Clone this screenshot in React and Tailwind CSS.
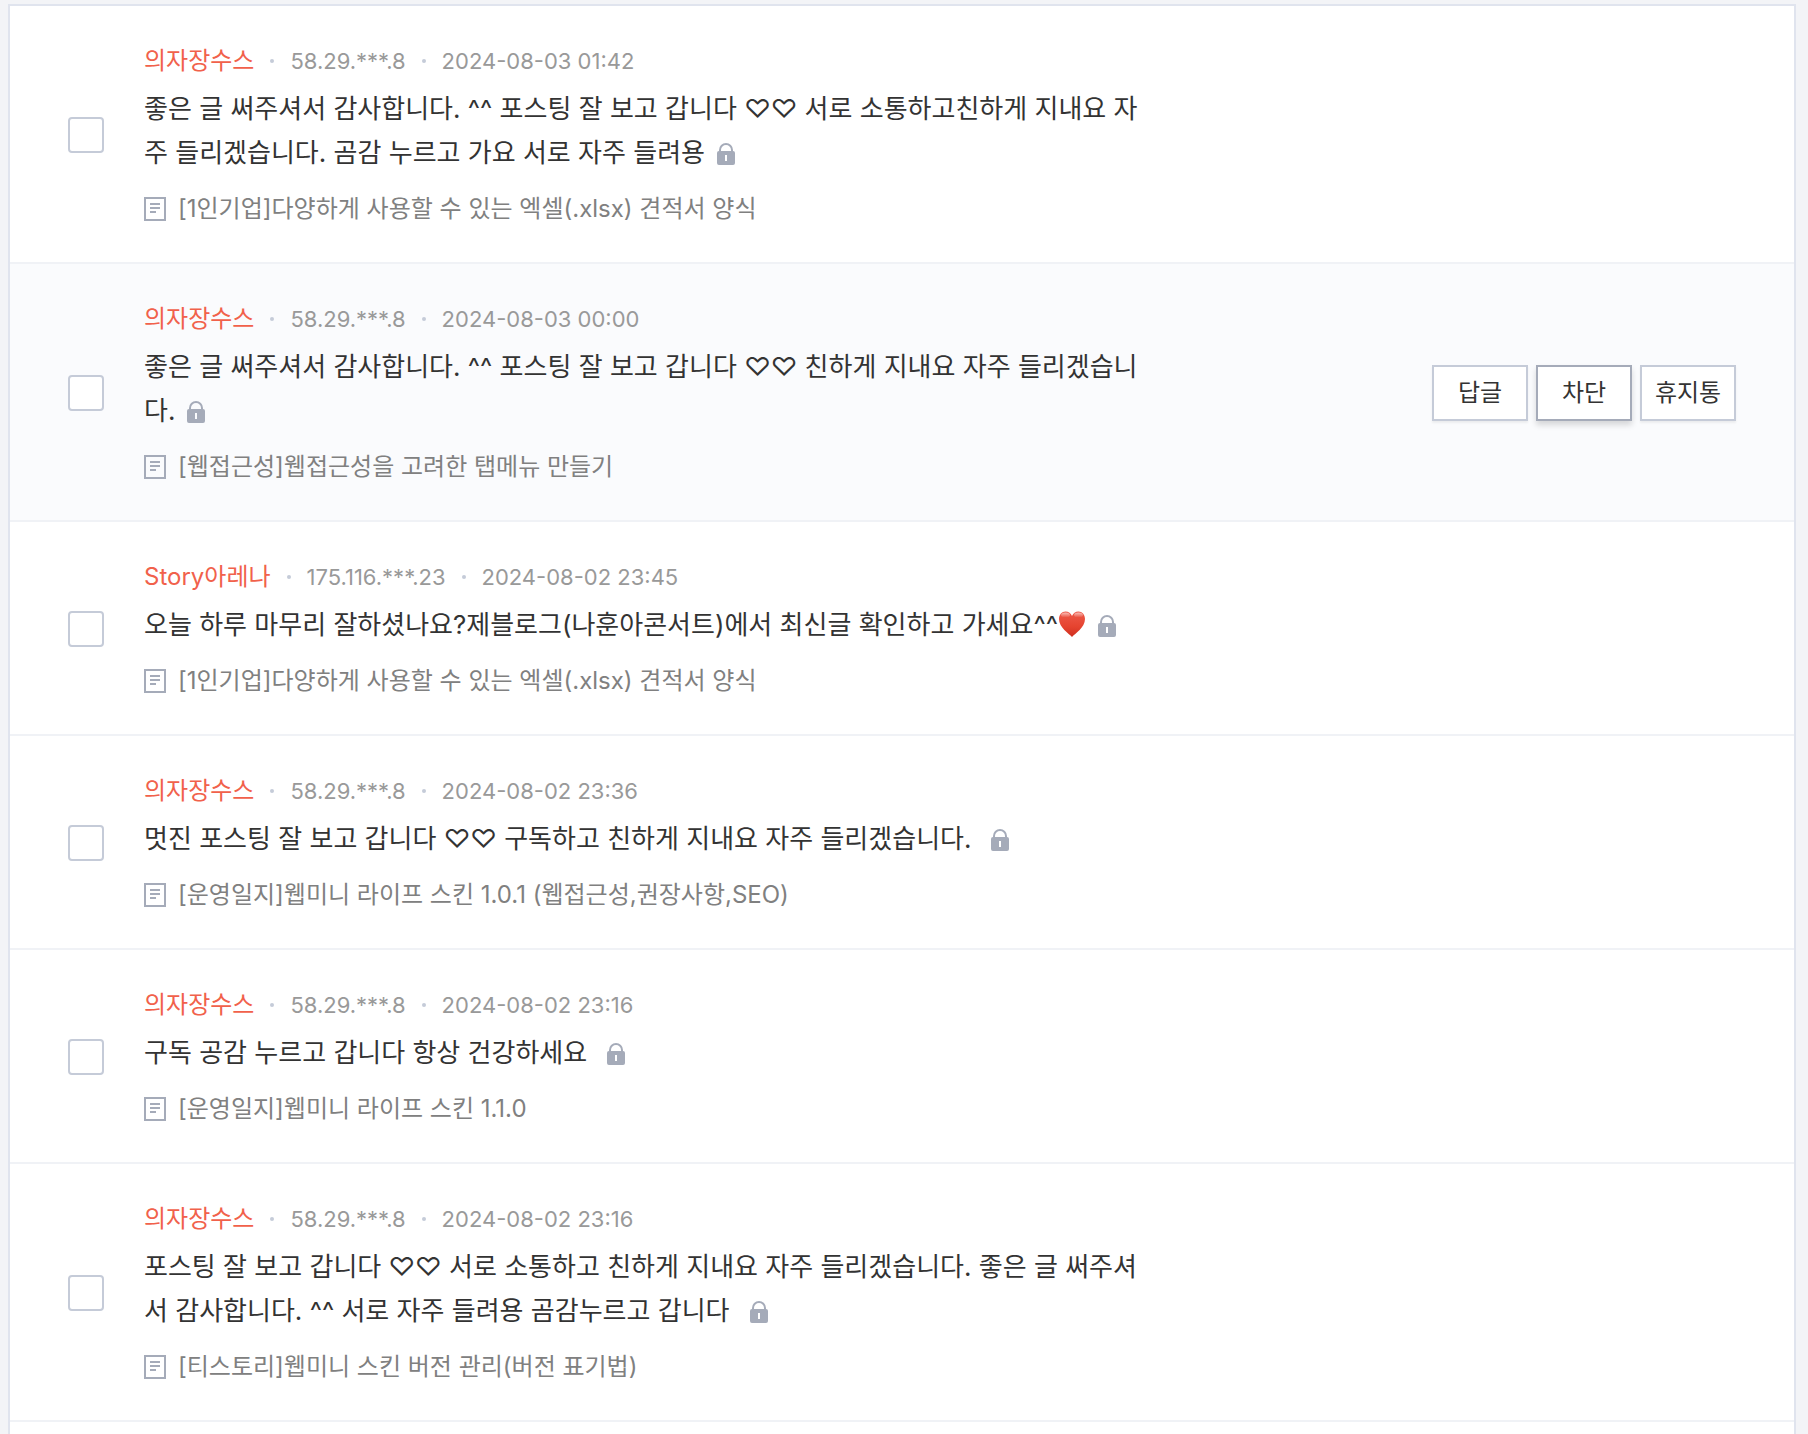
const comments = [
  {
    id: 1,
    author: '의자장수스',
    ip: '58.29.***.8',
    date: '2024-08-03 01:42',
    body: '좋은 글 써주셔서 감사합니다. ^^ 포스팅 잘 보고 갑니다 ♡♡ 서로 소통하고친하게 지내요 자주 들리겠습니다. 곰감 누르고 가요 서로 자주 들려용',
    post: '[1인기업]다양하게 사용할 수 있는 엑셀(.xlsx) 견적서 양식',
  },
  {
    id: 2,
    author: '의자장수스',
    ip: '58.29.***.8',
    date: '2024-08-03 00:00',
    body: '좋은 글 써주셔서 감사합니다. ^^ 포스팅 잘 보고 갑니다 ♡♡ 친하게 지내요 자주 들리겠습니다.',
    post: '[웹접근성]웹접근성을 고려한 탭메뉴 만들기',
    active: true,
  },
  {
    id: 3,
    author: 'Story아레나',
    ip: '175.116.***.23',
    date: '2024-08-02 23:45',
    body: '오늘 하루 마무리 잘하셨나요?제블로그(나훈아콘서트)에서 최신글 확인하고 가세요^^',
    redHeart: true,
    post: '[1인기업]다양하게 사용할 수 있는 엑셀(.xlsx) 견적서 양식',
  },
  {
    id: 4,
    author: '의자장수스',
    ip: '58.29.***.8',
    date: '2024-08-02 23:36',
    body: '멋진 포스팅 잘 보고 갑니다 ♡♡ 구독하고 친하게 지내요 자주 들리겠습니다.',
    wideGap: true,
    post: '[운영일지]웹미니 라이프 스킨 1.0.1 (웹접근성,권장사항,SEO)',
  },
  {
    id: 5,
    author: '의자장수스',
    ip: '58.29.***.8',
    date: '2024-08-02 23:16',
    body: '구독 공감 누르고 갑니다 항상 건강하세요',
    wideGap: true,
    post: '[운영일지]웹미니 라이프 스킨 1.1.0',
  },
  {
    id: 6,
    author: '의자장수스',
    ip: '58.29.***.8',
    date: '2024-08-02 23:16',
    body: '포스팅 잘 보고 갑니다 ♡♡ 서로 소통하고 친하게 지내요 자주 들리겠습니다. 좋은 글 써주셔서 감사합니다. ^^ 서로 자주 들려용 곰감누르고 갑니다',
    wideGap: true,
    post: '[티스토리]웹미니 스킨 버전 관리(버전 표기법)',
  },
];

function LockIcon() {
  return (
    <svg width="18" height="22" viewBox="0 0 18 22" className="inline-block align-[-3px]" role="img" aria-label="비밀글">
      <path d="M3 9V7a6 6 0 0 1 12 0v2" fill="none" stroke="#a5abb9" strokeWidth="2" />
      <path
        fillRule="evenodd"
        fill="#a5abb9"
        d="M2 8h14a2 2 0 0 1 2 2v10a2 2 0 0 1-2 2H2a2 2 0 0 1-2-2V10a2 2 0 0 1 2-2zM8 12v6h2v-6z"
      />
    </svg>
  );
}

function PostIcon() {
  return (
    <svg width="22" height="24" viewBox="0 0 22 24" className="shrink-0" aria-hidden="true">
      <rect x="1" y="1" width="20" height="22" fill="none" stroke="#a5abb9" strokeWidth="2" />
      <path d="M6 7h10M6 11h10M6 15h6" stroke="#a5abb9" strokeWidth="2" />
    </svg>
  );
}

function RedHeart() {
  return (
    <svg width="28" height="28" viewBox="0 0 28 28" className="inline-block align-[-4px]" role="img" aria-label="하트">
      <defs>
        <linearGradient id="heart" x1="0" y1="0" x2="0" y2="1">
          <stop offset="0" stopColor="#ee5a4a" />
          <stop offset="0.6" stopColor="#e5432f" />
          <stop offset="1" stopColor="#cf2f20" />
        </linearGradient>
        <linearGradient id="shine" x1="0" y1="0" x2="0" y2="1">
          <stop offset="0" stopColor="#fff" stopOpacity="0.6" />
          <stop offset="1" stopColor="#fff" stopOpacity="0" />
        </linearGradient>
      </defs>
      <path
        d="M14 27C11 23.500 1 17.500 1 9C1 4.500 4 1.500 7.500 1.500C10.500 1.500 13 3.500 14 6C15 3.500 17.500 1.500 20.500 1.500C24 1.500 27 4.500 27 9C27 17.500 17 23.500 14 27Z"
        fill="url(#heart)"
      />
      <ellipse cx="7.500" cy="5" rx="4.500" ry="2.500" fill="url(#shine)" />
      <ellipse cx="20.500" cy="5" rx="4.500" ry="2.500" fill="url(#shine)" />
    </svg>
  );
}

function Dot() {
  return <span className="mx-4 size-1 rounded-full bg-[#c5cbd8]" aria-hidden="true" />;
}

function ActionButton({ children, focused }) {
  return (
    <button
      type="button"
      className={
        focused
          ? 'h-14 w-24 border-2 border-[#a5abb9] bg-white text-[24px] leading-8 whitespace-nowrap text-[#333] shadow-[0_4px_6px_rgba(0,0,0,0.15)]'
          : 'h-14 w-24 border-2 border-[#c5cbd8] bg-white text-[24px] leading-8 whitespace-nowrap text-[#333] shadow-[0_2px_2px_rgba(0,0,0,0.06)]'
      }
    >
      {children}
    </button>
  );
}

function Comment({ item }) {
  return (
    <li
      className={
        item.active
          ? 'flex items-center border-b-2 border-[#f0f2f6] bg-[#fafbfd] px-[58px] pt-[37px] pb-[35px]'
          : 'flex items-center border-b-2 border-[#f0f2f6] px-[58px] pt-[37px] pb-[35px]'
      }
    >
      <input
        type="checkbox"
        aria-label={`${item.author} ${item.date} 댓글 선택`}
        className="size-9 shrink-0 appearance-none rounded-[4px] border-2 border-[#c5cbd8] bg-white checked:bg-[#c5cbd8]"
      />
      <div className="ml-10 min-w-0 max-w-[1000px] flex-1">
        <div className="flex items-center text-[22px] leading-9 text-[#999]">
          <a href="#author" className="text-[24px] text-[#f1614b]">{item.author}</a>
          <Dot />
          <span>{item.ip}</span>
          <Dot />
          <time>{item.date}</time>
        </div>
        <p className="mt-2 text-[26px] leading-[44px] break-all text-[#333]">
          {item.body}
          {item.redHeart && <RedHeart />}
          <span className={item.wideGap ? 'ml-5' : 'ml-3'}>
            <LockIcon />
          </span>
        </p>
        <a href="#post" className="mt-4 flex items-center gap-3 text-[24px] leading-9 text-[#808080]">
          <PostIcon />
          <span>{item.post}</span>
        </a>
      </div>
      {item.active && (
        <div className="ml-auto flex shrink-0 gap-2">
          <ActionButton>답글</ActionButton>
          <ActionButton focused>차단</ActionButton>
          <ActionButton>휴지통</ActionButton>
        </div>
      )}
    </li>
  );
}

export default function App() {
  return (
    <main className="min-h-screen bg-[#f3f4f7] pt-1 pr-3 pl-2 font-['Inter','Noto_Sans_CJK_KR',sans-serif]">
      <ul className="min-h-[calc(100vh-4px)] border-2 border-b-0 border-[#e0e4ee] bg-white">
        {comments.map((item) => (
          <Comment key={item.id} item={item} />
        ))}
      </ul>
    </main>
  );
}
